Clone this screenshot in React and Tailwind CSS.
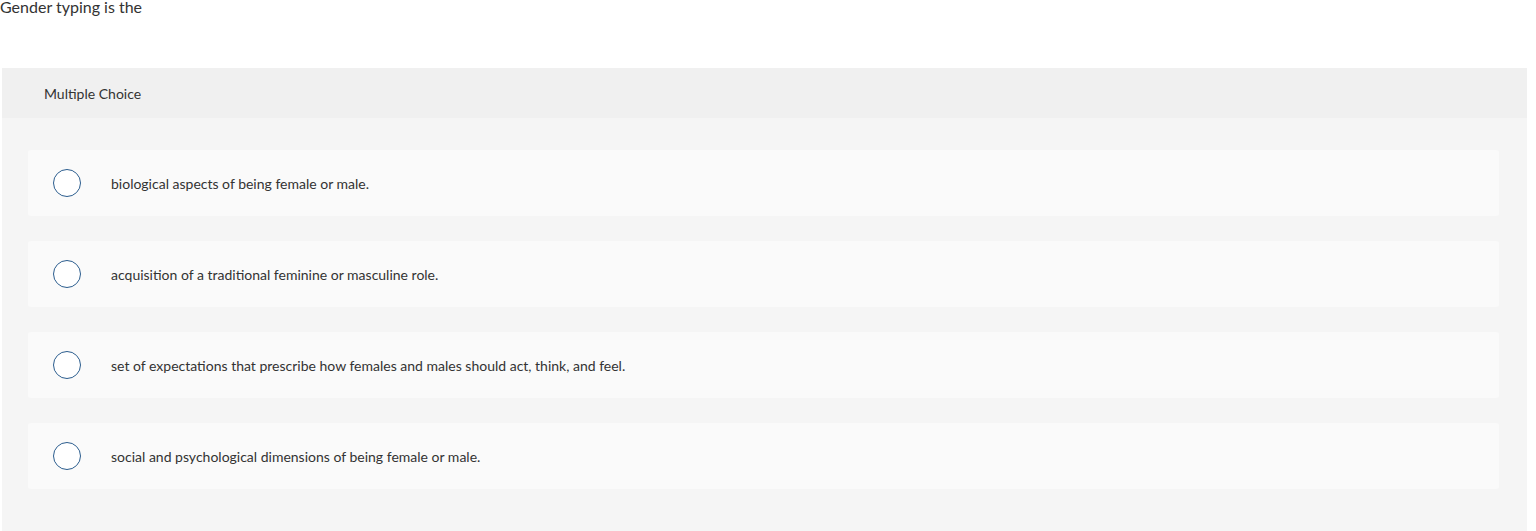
const options = [
  "biological aspects of being female or male.",
  "acquisition of a traditional feminine or masculine role.",
  "set of expectations that prescribe how females and males should act, think, and feel.",
  "social and psychological dimensions of being female or male.",
];

export default function App() {
  return (
    <div className="w-[1536px] h-[531px] bg-white overflow-hidden" style={{ fontFamily: "Lato, 'Noto Sans', sans-serif" }}>
      <p className="text-[16px] leading-[20px] text-[#333] -mt-[3px] h-[71px]">Gender typing is the</p>
      <div className="ml-[2px] w-[1525px] bg-[#f5f5f5] pb-[42px]">
        <div className="h-[50px] bg-[#f0f0f0] flex items-center pl-[42px] text-[14px] text-[#333]">
          Multiple Choice
        </div>
        <div className="flex flex-col gap-[25px] pt-[32px] pl-[26px] pr-[28px]">
          {options.map((text) => (
            <div key={text} className="h-[66px] bg-[#fafafa] rounded-[3px] flex items-center pl-[25px]">
              <span className="w-[28px] h-[28px] rounded-full border-[1.5px] border-[#2b5d8e] bg-white shrink-0" />
              <span className="ml-[30px] text-[14px] text-[#333]">{text}</span>
            </div>
          ))}
        </div>
      </div>
    </div>
  );
}
